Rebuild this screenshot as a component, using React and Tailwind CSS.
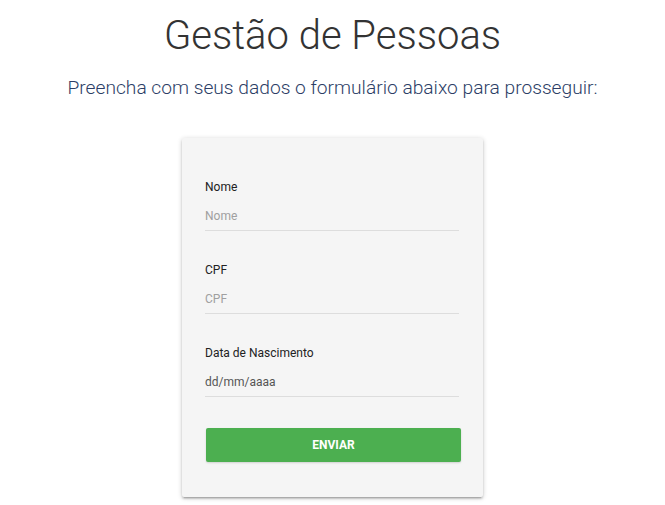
import React, { useState } from 'react';

const fields = [
  { id: 'nome', label: 'Nome', placeholder: 'Nome', type: 'text' },
  { id: 'cpf', label: 'CPF', placeholder: 'CPF', type: 'text' },
  { id: 'nascimento', label: 'Data de Nascimento', placeholder: 'dd/mm/aaaa', type: 'text', dark: true },
];

const App = () => {
  const [form, setForm] = useState({ nome: '', cpf: '', nascimento: '' });

  const handleSubmit = (e) => {
    e.preventDefault();
  };

  return (
    <div className="min-h-screen bg-white flex flex-col items-center font-['Roboto',sans-serif]">
      <h1 className="mt-[12px] text-[40px] leading-[48px] font-light text-[#333333]">
        Gestão de Pessoas
      </h1>
      <p className="mt-[16px] text-[19.2px] leading-[24px] font-light text-[#2c3e66]">
        Preencha com seus dados o formulário abaixo para prosseguir:
      </p>

      <form
        onSubmit={handleSubmit}
        className="mt-[38px] w-[301px] bg-[#f5f5f5] rounded-[2px] pt-[41px] pb-[35px] pl-[23px] shadow-[0_2px_2px_0_rgba(0,0,0,0.14),0_3px_1px_-2px_rgba(0,0,0,0.12),0_1px_5px_0_rgba(0,0,0,0.2)]"
      >
        <div className="flex flex-col gap-[31px]">
          {fields.map((f) => (
            <div key={f.id} className="flex flex-col">
              <label htmlFor={f.id} className="text-[12px] leading-[16px] text-[#222222]">
                {f.label}
              </label>
              <input
                id={f.id}
                type={f.type}
                value={form[f.id]}
                onChange={(e) => setForm({ ...form, [f.id]: e.target.value })}
                placeholder={f.placeholder}
                className={`mt-[6px] w-[254px] h-[30px] bg-transparent border-b border-[#dddddd] outline-none text-[12px] text-[#333333] ${
                  f.dark ? 'placeholder:text-[#555555]' : 'placeholder:text-[#a0a0a0]'
                }`}
              />
            </div>
          ))}
        </div>

        <button
          type="submit"
          className="mt-[31px] ml-px w-[255px] h-[34px] rounded-[2px] bg-[#4caf50] text-white text-[12px] font-bold shadow-[0_1px_2px_rgba(0,0,0,0.15)]"
        >
          ENVIAR
        </button>
      </form>
    </div>
  );
};

export default App;
